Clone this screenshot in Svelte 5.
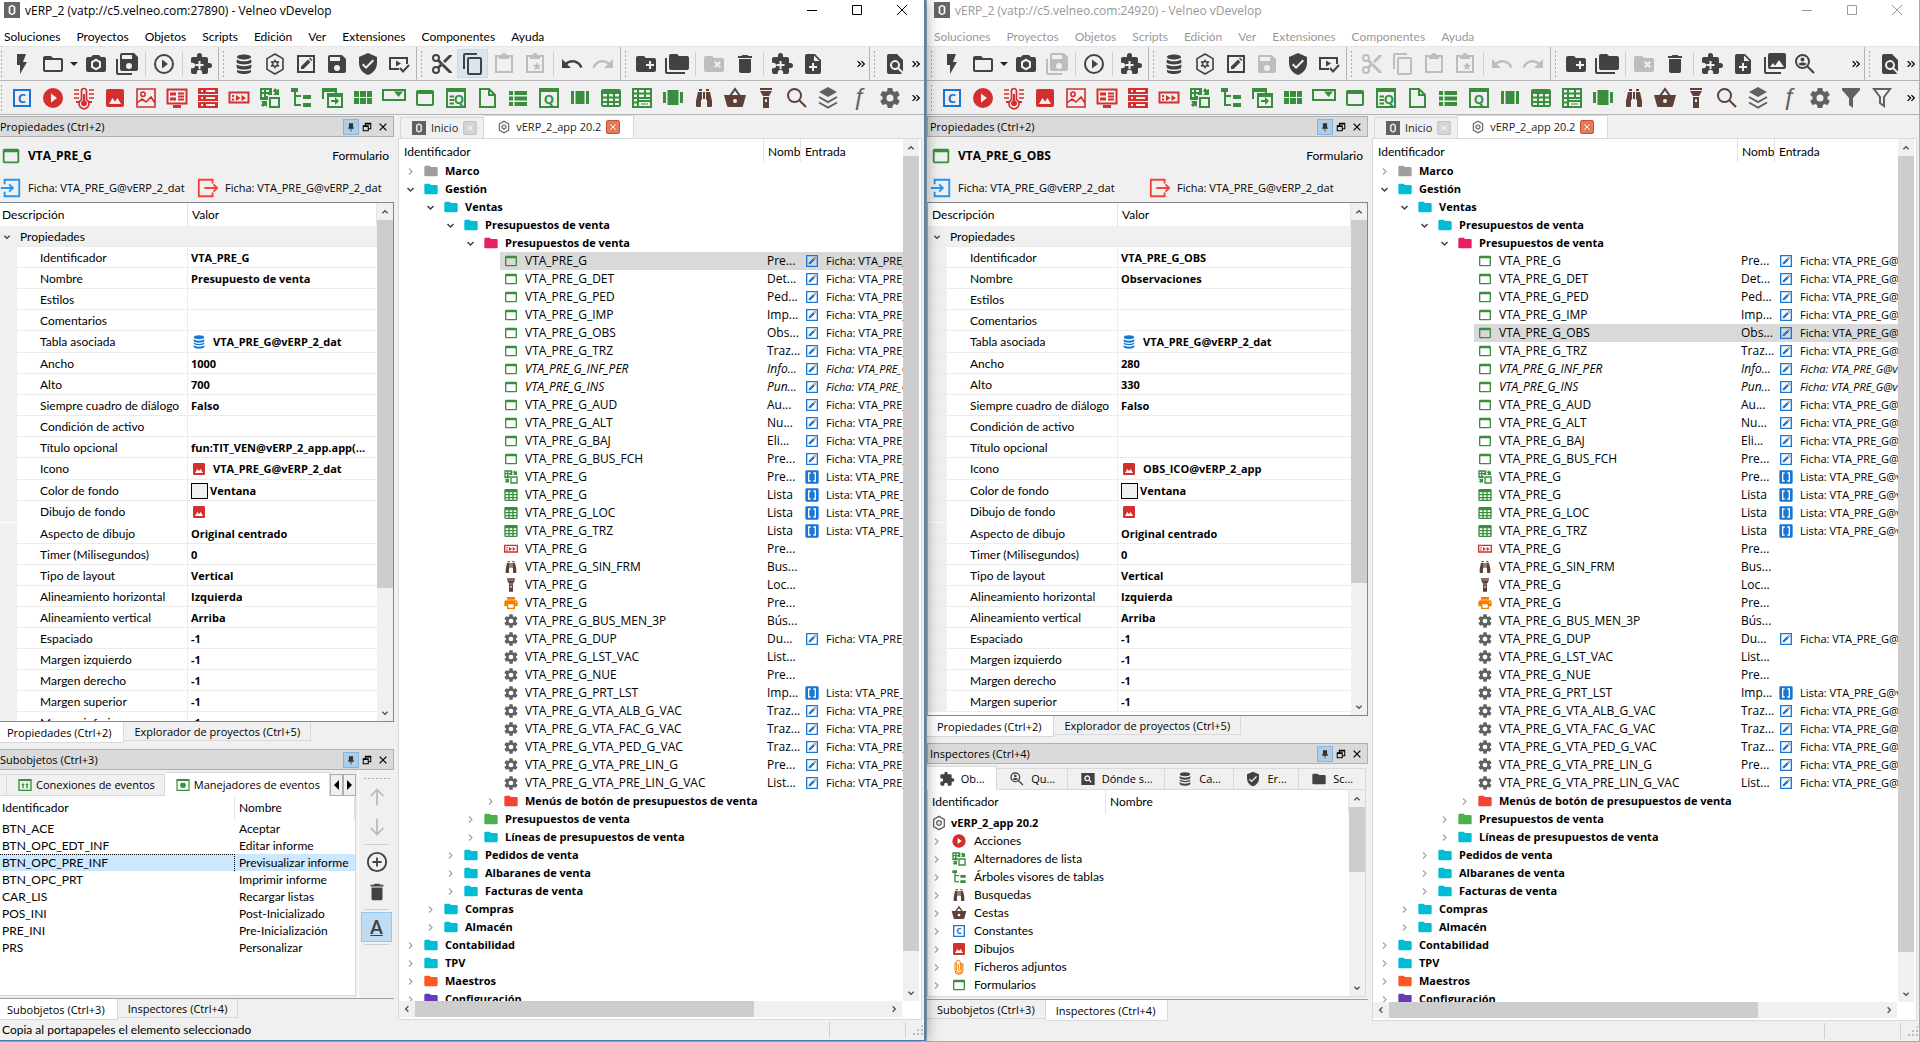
<script lang="ts">
  type Icon = { d?: string; s?: string; w?: number; t?: string };
  type Node = { depth: number; icon: string; name: string; folder?: boolean; open?: boolean; italic?: boolean; short?: string; entry?: string };

  const folderPath = "M10 4l2 2h8a2 2 0 0 1 2 2v10a2 2 0 0 1-2 2H4a2 2 0 0 1-2-2V6c0-1.1.9-2 2-2h6z";
  const puzzlePath =
    "M20.500 11H19V7a2 2 0 0 0-2-2h-4V3.500A2.500 2.500 0 0 0 10.500 1 2.500 2.500 0 0 0 8 3.500V5H4a2 2 0 0 0-2 2v3.800h1.500c1.500 0 2.700 1.200 2.700 2.700S5 16.200 3.500 16.200H2V20a2 2 0 0 0 2 2h3.800v-1.500c0-1.500 1.200-2.700 2.700-2.700s2.700 1.200 2.700 2.700V22H17a2 2 0 0 0 2-2v-4h1.500a2.500 2.500 0 0 0 0-5z";

  const icons: Record<string, Icon> = {
    bolt: { d: "M7 2v11h3v9l7-12h-4l3-8z" },
    folderOpen: { d: "M20 18H4V8h16m0-2h-8l-2-2H4c-1.100 0-2 .9-2 2v12a2 2 0 0 0 2 2h16a2 2 0 0 0 2-2V8a2 2 0 0 0-2-2z" },
    camera: {
      d: "M4 5h3l2-2h6l2 2h3a2 2 0 0 1 2 2v11a2 2 0 0 1-2 2H4a2 2 0 0 1-2-2V7a2 2 0 0 1 2-2zM12 6.500l-5 3v6l5 3 5-3v-6zM12 9l3 1.800v3.400L12 16l-3-1.800v-3.400z",
    },
    saveAll: {
      d: "M17 7V3H7v4h10m-3 10a3 3 0 0 0 0-6 3 3 0 0 0 0 6m5-16 4 4v12a2 2 0 0 1-2 2H7a2 2 0 0 1-2-2V3a2 2 0 0 1 2-2h12M1 7h2v14h14v2H3a2 2 0 0 1-2-2V7z",
    },
    play: { d: "M10 16.500l6-4.500-6-4.500v9z", s: "M12 3a9 9 0 1 0 0 18 9 9 0 0 0 0-18z" },
    puzzleAdd: { d: puzzlePath + "M9.500 9v3h-3v2h3v3h2v-3h3v-2h-3V9z" },
    puzzle: { d: puzzlePath },
    barrel: {
      d: "M5 5c0-1.500 3-2.500 7-2.500s7 1 7 2.500-3 2.500-7 2.500S5 6.500 5 5zM5 7.500c2 1.400 4 1.800 7 1.800s5-.4 7-1.800l.6 3c-2 1.400-4.600 1.900-7.600 1.900s-5.600-.5-7.600-1.900zM4.500 12.500c2.200 1.200 4.500 1.700 7.500 1.700s5.300-.5 7.500-1.700l-.3 3.500c-2 1-4.200 1.500-7.200 1.500S6.800 17 4.800 16zM5 17.700c2 1 4 1.400 7 1.400s5-.4 7-1.400v1.800c0 1.500-3 2.500-7 2.500s-7-1-7-2.500z",
    },
    hexGear: {
      s: "M12 2l8 4.600v10.800L12 22l-8-4.600V6.600zM12 9.500a2.500 2.500 0 1 0 0 5 2.500 2.500 0 0 0 0-5zM12 7.500v2M12 14.500v2M8 9.800l2 1M14 13.200l2 1M16 9.800l-2 1M10 13.200l-2 1",
      w: 1.600,
    },
    hex: { s: "M12 2l8 4.600v10.800L12 22l-8-4.600V6.600zM12 8.500a3.500 3.500 0 1 0 0 7 3.500 3.500 0 0 0 0-7zM12 11.500v1" },
    edit: { s: "M4 4h16v16H4z", d: "M7 17v-2.500l7-7 2.500 2.500-7 7zM15 6.500l1-1 2.500 2.500-1 1z" },
    save: {
      d: "M15 9H5V5h10m-3 14a3 3 0 0 1 0-6 3 3 0 0 1 0 6m5-16H5a2 2 0 0 0-2 2v14a2 2 0 0 0 2 2h14a2 2 0 0 0 2-2V7l-4-4z",
    },
    shield: {
      d: "M10 17l-4-4 1.400-1.400L10 14.200l6.600-6.600L18 9m-6-8L3 5v6c0 5.600 3.800 10.700 9 12 5.200-1.300 9-6.400 9-12V5l-9-4z",
    },
    screenCheck: { d: "M9 8.500v6l5-3z", s: "M12 17H3V6h17v6M13 16l3 3.500 6-6.500" },
    cut: {
      d: "M19 3l-6 6 2 2 7-7V3m-10 9.500a.5.5 0 0 1 0-1 .5.5 0 0 1 0 1M6 20a2 2 0 0 1 0-4 2 2 0 0 1 0 4M6 8a2 2 0 0 1 0-4 2 2 0 0 1 0 4m3.640-.36c.23-.5.36-1.050.36-1.640a4 4 0 0 0-8 0 4 4 0 0 0 4 4c.59 0 1.140-.13 1.640-.36L10 12l-2.360 2.360C7.140 14.130 6.590 14 6 14a4 4 0 0 0 0 8 4 4 0 0 0 4-4c0-.59-.13-1.140-.36-1.640L12 14l7 7h3v-1L9.640 7.640z",
    },
    copy: {
      d: "M19 21H8V7h11m0-2H8a2 2 0 0 0-2 2v14a2 2 0 0 0 2 2h11a2 2 0 0 0 2-2V7a2 2 0 0 0-2-2m-3-4H4a2 2 0 0 0-2 2v14h2V3h12V1z",
    },
    paste: { s: "M4 4h16v16H4z", d: "M7 3h2.200a3 3 0 0 1 5.600 0H17v4H7zM12 3a1 1 0 1 0 0 2 1 1 0 0 0 0-2z" },
    pasteStar: {
      s: "M4 4h16v16H4z",
      d: "M7 3h2.200a3 3 0 0 1 5.600 0H17v4H7zM12 3a1 1 0 1 0 0 2 1 1 0 0 0 0-2zM14 10l1.200 2.700 2.900.3-2.200 2 .6 2.900-2.500-1.500-2.500 1.500.6-2.900-2.200-2 2.900-.3z",
    },
    undo: {
      d: "M12.500 8c-2.700 0-5 1-6.900 2.600L2 7v9h9l-3.600-3.600c1.400-1.200 3.100-1.900 5.100-1.900 3.500 0 6.500 2.300 7.600 5.500l2.400-.8C21 11 17.100 8 12.500 8z",
    },
    redo: {
      d: "M18.400 10.600C16.500 9 14.200 8 11.500 8c-4.600 0-8.600 3-10 7.200l2.400.8a8 8 0 0 1 7.600-5.500c2 0 3.700.7 5.100 1.900L13 16h9V7z",
    },
    folderAdd: { d: folderPath + "M15 9v3h-3v2h3v3h2v-3h3v-2h-3V9z" },
    folders: {
      d: "M22 4h-8l-2-2H6a2 2 0 0 0-2 2v12a2 2 0 0 0 2 2h16a2 2 0 0 0 2-2V6a2 2 0 0 0-2-2M2 6H0v14a2 2 0 0 0 2 2h18v-2H2V6z",
    },
    folderRemove: { d: folderPath + "M13.400 9L12 10.400l2.100 2.100L12 14.600l1.400 1.400 2.100-2.100 2.100 2.100 1.400-1.400-2.100-2.100 2.100-2.100L17.600 9l-2.100 2.100z" },
    folder: { d: folderPath },
    trash: { d: "M19 4h-3.500l-1-1h-5l-1 1H5v2h14M6 19a2 2 0 0 0 2 2h8a2 2 0 0 0 2-2V7H6v12z" },
    fileAdd: {
      d: "M13 9h5.500L13 3.500V9M6 2h8l6 6v12a2 2 0 0 1-2 2H6a2 2 0 0 1-2-2V4c0-1.100.9-2 2-2zM11 11v3H8v2h3v3h2v-3h3v-2h-3v-3z",
    },
    images: {
      d: "M24 15V3a2 2 0 0 0-2-2H8a2 2 0 0 0-2 2v12a2 2 0 0 0 2 2h14a2 2 0 0 0 2-2m-13-4l2 2.700L17 8l5 7H8M2 5v15a2 2 0 0 0 2 2h15v-2H4V5z",
    },
    searchUser: {
      s: "M9.500 3a6.500 6.500 0 1 0 0 13 6.500 6.500 0 0 0 0-13zM14.500 14.500L21 21",
      d: "M9.500 5.500a2 2 0 1 1 0 4 2 2 0 0 1 0-4zM5.500 12c1-2 7-2 8 0-1 2-7 2-8 0z",
    },
    findPage: {
      d: "M20 19.600V8l-6-6H6a2 2 0 0 0-2 2v16c0 1.100.9 2 2 2h12c.5 0 .9-.1 1.200-.4l-4.400-4.400A5 5 0 1 1 17 13c0 1-.3 2-.8 2.800zM9 13a3 3 0 1 0 6 0 3 3 0 0 0-6 0z",
    },
    constant: { s: "M4 4h16v16H4z", t: "C" },
    action: { d: "M10 16.500v-9l6 4.500M12 2a10 10 0 1 0 0 20 10 10 0 0 0 0-20z" },
    thermo: {
      s: "M14.500 13.500V5a2.500 2.500 0 0 0-5 0v8.500a5 5 0 1 0 5 0zM2 4h5M2 8h5M2 12h5M17 4h5M17 8h5M17 12h5",
      w: 1.700,
      d: "M11 8h2v6.500a3 3 0 1 1-2 0zM4 15h3v2H4zM17 15h3v2h-3z",
    },
    image: { d: "M5 3h14a2 2 0 0 1 2 2v14a2 2 0 0 1-2 2H5a2 2 0 0 1-2-2V5c0-1.100.9-2 2-2zM6 18h12l-3.500-6-2.500 3.500L9.500 12z" },
    picture: { s: "M3 3h18v18H3zM9 6a2.200 2.200 0 1 0 0 4.400A2.200 2.200 0 0 0 9 6zM3 17l5-4 4 3 5-5 4 6", w: 1.600 },
    monitor: { s: "M2.500 3.500h19v14h-19z", d: "M5 6.500h6v3H5zM5 11.500h6v3H5zM13 6.500h6v2h-6zM13 9.500h6v2h-6zM13 12.500h6v2h-6zM8 19h8v3H8z" },
    servers: { d: "M2 2h20v6H2zM5 4v2h2V4zM10 4v2h9V4zM2 9h20v6H2zM5 11v2h2v-2zM10 11v2h9v-2zM2 16h20v6H2zM5 18v2h2v-2zM10 18v2h9v-2z" },
    ticker: { s: "M2.500 6.500h19v10h-19z", d: "M5 9h2v2H5zM5 12.500h2v2H5zM9 9l4.500 3L9 15zM14.500 9l4.500 3-4.500 3z" },
    swap: {
      d: "M2 2h12v7h-4v5H2zM4 4v2h2V4zM8 4v2h3V4zM4 8v3h2V8zM8 8v2h2V8zM17 2l2 2 2-1v6h-6l2-2-2-2zM3 15h6v6l-2-1.500L5 21l-2-2 1.500-2z",
      s: "M12 12h9v9h-9z",
    },
    tree: { s: "M6 4v15h6M6 10h6", d: "M2 2h7v4H2zM14 9h8v4h-8zM14 17h8v4h-8z" },
    copyForm: { s: "M3 13V3h13v4M8 8h14v13H8zM3 5h13M8 10h14", d: "M15 11l4 4-4 4v-3h-4v-2h4z" },
    blocks: { d: "M3 5h5v6H3zM9 5h6v6H9zM16 5h5v6h-5zM3 12h5v6H3zM9 12h6v6H9zM16 12h5v6h-5z" },
    combo: { s: "M1 4h22v10H1z", d: "M12 5.500h9L16.500 11z" },
    form: { d: "M5 4h14a2 2 0 0 1 2 2v12a2 2 0 0 1-2 2H5a2 2 0 0 1-2-2V6c0-1.100.9-2 2-2zM5 8v10h14V8z" },
    query: { s: "M3 3h18v18H3zM3 5h18M5.500 10.500h4.500M5.500 14h4.500M5.500 17.500h4.500", t: "q" },
    file: { s: "M5 3h9l6 6v12H5zM14 3v6h6" },
    list: { d: "M3 5h4v4H3zM8.500 5H21v4H8.500zM3 10.500h4v4H3zM8.500 10.500H21v4H8.500zM3 16h4v4H3zM8.500 16H21v4H8.500z" },
    queryBox: { s: "M3 3h18v18H3zM3 5h18", t: "Q" },
    columns: { d: "M3 5h3v13H3zM7.500 5h9v13h-9zM18 5h3v13h-3z" },
    grid: {
      d: "M4 3h16a2 2 0 0 1 2 2v14a2 2 0 0 1-2 2H4a2 2 0 0 1-2-2V5c0-1.100.9-2 2-2zM4 8v2.500h4V8zM10 8v2.500h4V8zM16 8v2.500h4V8zM4 12.500V15h4v-2.500zM10 12.500V15h4v-2.500zM16 12.500V15h4v-2.500zM4 17v2h4v-2zM10 17v2h4v-2zM16 17v2h4v-2z",
    },
    gridEdit: {
      d: "M2 2h20v20H2zM4 4v2.500h3V4zM9 4v2.500h5V4zM16 4v2.500h4V4zM4 8.500V11h3V8.500zM9 8.500V11h5V8.500zM16 8.500V11h4V8.500zM4 13v2.500h3V13zM9 13v1h11v-1zM4 17.500V20h3v-2.500zM9 16v4h11v-4zM11 17.500h7v1h-7z",
    },
    carousel: { d: "M6.500 4h11v15h-11zM2 6h3v11H2zM19 6h3v11h-3z" },
    binoculars: {
      d: "M11 6h2v7h-2zM9 20a1 1 0 0 1-1 1H5a1 1 0 0 1-1-1v-5l2-9h4v7a1 1 0 0 1-1 1zM10 5H7V3h3zM15 20v-6a1 1 0 0 1-1-1V6h4l2 9v5a1 1 0 0 1-1 1h-3a1 1 0 0 1-1-1zM14 5V3h3v2z",
    },
    basket: { s: "M7 10l5-7 5 7", d: "M1 9h22l-3 11c-.3.700-.900 1-1.500 1h-13c-.7 0-1.200-.3-1.500-1zM12 13a2 2 0 1 0 0 4 2 2 0 0 0 0-4z" },
    torch: { d: "M6 2h12v2H6zM6 5h12l-3 5H9zM9 11h6v11H9zM12 13a1 1 0 0 0-1 1v2h2v-2a1 1 0 0 0-1-1z" },
    search: { s: "M9.500 3a6.500 6.500 0 1 0 0 13 6.500 6.500 0 0 0 0-13zM14.500 14.500L21 21" },
    layers: { d: "M12 1l9 5-9 5-9-5z", s: "M3 11l9 5 9-5M3 16.500l9 5 9-5" },
    func: { t: "ƒ" },
    gear: {
      d: "M12 15.500a3.500 3.500 0 1 1 0-7 3.500 3.500 0 0 1 0 7m7.430-2.530c.04-.32.07-.64.07-.97 0-.33-.03-.66-.07-1l2.110-1.630c.19-.15.24-.42.12-.64l-2-3.460c-.12-.22-.39-.31-.61-.22l-2.490 1c-.52-.39-1.060-.73-1.690-.98l-.37-2.650A.506.506 0 0 0 14 2h-4c-.25 0-.46.18-.5.42l-.37 2.650c-.63.25-1.170.59-1.690.98l-2.490-1c-.22-.09-.49 0-.61.22l-2 3.460c-.13.22-.07.49.12.64L4.570 11c-.04.34-.07.67-.07 1 0 .33.03.65.07.97l-2.110 1.660c-.19.15-.25.42-.12.64l2 3.460c.12.22.39.3.61.22l2.490-1.010c.52.4 1.060.74 1.690.99l.37 2.650c.04.24.25.42.5.42h4c.25 0 .46-.18.5-.42l.37-2.650c.63-.26 1.170-.59 1.690-.99l2.490 1.010c.22.08.49 0 .61-.22l2-3.460c.12-.22.07-.49-.12-.64l-2.110-1.660z",
    },
    filter: { d: "M3 2h18v2l-7 8v10l-4-3v-7L3 4z" },
    filterOff: { s: "M4 3h16l-6 8v9l-4-3v-6z" },
    printer: {
      d: "M18 3H6v4h12m1 5a1 1 0 0 1 0-2 1 1 0 0 1 0 2m-3 7H8v-5h8m3-6H5a3 3 0 0 0-3 3v6h4v4h12v-4h4v-6a3 3 0 0 0-3-3z",
    },
    brackets: { d: "M4 2h16a2 2 0 0 1 2 2v16a2 2 0 0 1-2 2H4a2 2 0 0 1-2-2V4c0-1.100.9-2 2-2zM6 5v14h4v-2H8V7h2V5zM14 5v2h2v10h-2v2h4V5z" },
    database: {
      d: "M12 2c4.400 0 8 1.300 8 3s-3.600 3-8 3-8-1.300-8-3 3.600-3 8-3zM4 7.500C5.500 9 8.500 10 12 10s6.500-1 8-2.500V10c0 1.700-3.600 3-8 3s-8-1.300-8-3zM4 12.500c1.500 1.500 4.500 2.500 8 2.500s6.500-1 8-2.500V14c0 1.700-3.600 3-8 3s-8-1.300-8-3zM4 16.500C5.500 18 8.500 19 12 19s6.500-1 8-2.500V19c0 1.700-3.600 3-8 3s-8-1.300-8-3z",
    },
    screenSearch: { d: "M2 3h20v18H2zM11 6.500a4.500 4.500 0 1 0 2.300 8.300L16 17.500l1.500-1.500-2.700-2.700A4.500 4.500 0 0 0 11 6.500zM11 8.500a2.500 2.500 0 1 1 0 5 2.500 2.500 0 0 1 0-5z" },
    clip: { s: "M16 6v11a4 4 0 0 1-8 0V5a3 3 0 0 1 6 0v11a1.500 1.500 0 0 1-3 0V7M18 6v11a6 6 0 0 1-12 0V5", w: 1.500 },
    handler: { s: "M3 4h18v16H3zM3 5h18M12 9.500a3 3 0 1 0 0 6 3 3 0 0 0 0-6zM7.500 12.500h9M9 9l6 7M15 9l-6 7", w: 1.800 },
    connection: { s: "M3 4h18v16H3zM3 5h18M9 17v-6M15 17v-6", d: "M6.500 12L9 9l2.500 3zM12.500 12L15 9l2.500 3z" },
    enter: { s: "M5 8V3h16v18H5v-5M1 12h13M10 8l4 4-4 4" },
    leave: { s: "M17 7V3H2v18h15v-4M8 12h14M18 8l4 4-4 4" },
    up: { s: "M12 21V4M5 11l7-7 7 7" },
    down: { s: "M12 3v17M5 13l7 7 7-7" },
    add: { s: "M12 2a10 10 0 1 0 0 20 10 10 0 0 0 0-20zM12 7v10M7 12h10" },
    logo: { d: "M0 0h24v24H0zM12 4L7 7v10l5 3 5-3V7zM12 6.500l2.500 1.500v8L12 17.500 9.500 16V8z" },
    pin: { d: "M7 3h10v10h2v3h-6v7h-2v-7H5v-3h2z" },
    restore: { s: "M3 9h12v12H3zM3 11h12M8 9V3h13v13h-6M8 5h13", w: 2.500 },
    close: { s: "M4 4l16 16M20 4L4 20", w: 3 },
    right: { s: "M8 4l8 8-8 8", w: 3 },
    chevUp: { s: "M4 16l8-8 8 8", w: 4 },
    chevDown: { s: "M4 8l8 8 8-8", w: 4 },
    chevLeft: { s: "M16 4l-8 8 8 8", w: 4 },
    chevRight: { s: "M8 4l8 8-8 8", w: 4 },
    more: { s: "M4 5l7 7-7 7M13 5l7 7-7 7", w: 3 },
  };

  const fileTools = ["bolt", "folderOpen", "v", "camera", "saveAll", "|", "play", "|", "puzzleAdd"];
  const objectTools = ["barrel", "hexGear", "edit", "save", "shield", "screenCheck"];
  const editTools = ["cut", "copy", "paste", "pasteStar", "|", "undo", "redo"];
  const projectTools = ["folderAdd", "folders", "|", "folderRemove", "trash", "|", "puzzleAdd", "fileAdd"];

  const kinds: [string, string[]][] = [
    ["blue", ["constant"]],
    ["red", ["action", "thermo", "image", "picture", "monitor", "servers", "ticker"]],
    ["green", ["swap", "tree", "copyForm", "blocks", "combo", "form", "query", "file", "list", "queryBox", "columns", "grid", "gridEdit", "carousel"]],
    ["brown", ["binoculars", "basket", "torch", "search"]],
    ["grey", ["layers", "func", "gear"]],
  ];

  const menus = ["Soluciones", "Proyectos", "Objetos", "Scripts", "Edición", "Ver", "Extensiones", "Componentes", "Ayuda"];

  const folder = (depth: number, name: string, icon = "cyan", open = false): Node => ({ depth, name, icon, open, folder: true });

  const leaves = `form green VTA_PRE_G Pre... F
form green VTA_PRE_G_DET Det... F
form green VTA_PRE_G_PED Ped... F
form green VTA_PRE_G_IMP Imp... F
form green VTA_PRE_G_OBS Obs... F
form green VTA_PRE_G_TRZ Traz... F
form green VTA_PRE_G_INF_PER Info... F i
form green VTA_PRE_G_INS Pun... F i
form green VTA_PRE_G_AUD Au... F
form green VTA_PRE_G_ALT Nu... F
form green VTA_PRE_G_BAJ Eli... F
form green VTA_PRE_G_BUS_FCH Pre... F
swap green VTA_PRE_G Pre... L
grid green VTA_PRE_G Lista L
grid green VTA_PRE_G_LOC Lista L
grid green VTA_PRE_G_TRZ Lista L
ticker red VTA_PRE_G Pre... -
binoculars brown VTA_PRE_G_SIN_FRM Bus... -
torch brown VTA_PRE_G Loc... -
printer orange VTA_PRE_G Pre... -
gear grey VTA_PRE_G_BUS_MEN_3P Bús... -
gear grey VTA_PRE_G_DUP Du... F
gear grey VTA_PRE_G_LST_VAC List... -
gear grey VTA_PRE_G_NUE Pre... -
gear grey VTA_PRE_G_PRT_LST Imp... L
gear grey VTA_PRE_G_VTA_ALB_G_VAC Traz... F
gear grey VTA_PRE_G_VTA_FAC_G_VAC Traz... F
gear grey VTA_PRE_G_VTA_PED_G_VAC Traz... F
gear grey VTA_PRE_G_VTA_PRE_LIN_G Pre... F
gear grey VTA_PRE_G_VTA_PRE_LIN_G_VAC List... F`
    .split("\n")
    .map((line): Node & { color: string } => {
      const [icon, color, name, short, entry, italic] = line.split(" ");
      return { depth: 4, icon, color, name, short, entry, italic: !!italic };
    });

  const nodes: (Node & { color?: string })[] = [
    folder(0, "Marco", "silver"),
    folder(0, "Gestión", "cyan", true),
    folder(1, "Ventas", "cyan", true),
    folder(2, "Presupuestos de venta", "cyan", true),
    folder(3, "Presupuestos de venta", "pink", true),
    ...leaves,
    folder(4, "Menús de botón de presupuestos de venta", "scarlet"),
    folder(3, "Presupuestos de venta", "lime"),
    folder(3, "Líneas de presupuestos de venta"),
    folder(2, "Pedidos de venta"),
    folder(2, "Albaranes de venta"),
    folder(2, "Facturas de venta"),
    folder(1, "Compras"),
    folder(1, "Almacén"),
    folder(0, "Contabilidad"),
    folder(0, "TPV"),
    folder(0, "Maestros", "ember"),
    folder(0, "Configuración", "violet"),
  ];

  const properties = (id: string, name: string, width: string, height: string, title: string, icon: string) => [
    ["Identificador", id],
    ["Nombre", name],
    ["Estilos", ""],
    ["Comentarios", ""],
    ["Tabla asociada", "VTA_PRE_G@vERP_2_dat", "database"],
    ["Ancho", width],
    ["Alto", height],
    ["Siempre cuadro de diálogo", "Falso"],
    ["Condición de activo", ""],
    ["Título opcional", title],
    ["Icono", icon, "image"],
    ["Color de fondo", "Ventana", "swatch"],
    ["Dibujo de fondo", "", "image"],
    ["Aspecto de dibujo", "Original centrado"],
    ["Timer (Milisegundos)", "0"],
    ["Tipo de layout", "Vertical"],
    ["Alineamiento horizontal", "Izquierda"],
    ["Alineamiento vertical", "Arriba"],
    ["Espaciado", "-1"],
    ["Margen izquierdo", "-1"],
    ["Margen derecho", "-1"],
    ["Margen superior", "-1"],
    ["Margen inferior", "-1"],
  ];

  const handlers = [
    ["BTN_ACE", "Aceptar"],
    ["BTN_OPC_EDT_INF", "Editar informe"],
    ["BTN_OPC_PRE_INF", "Previsualizar informe"],
    ["BTN_OPC_PRT", "Imprimir informe"],
    ["CAR_LIS", "Recargar listas"],
    ["POS_INI", "Post-Inicializado"],
    ["PRE_INI", "Pre-Inicialización"],
    ["PRS", "Personalizar"],
  ];

  const inspectorTabs = [
    ["puzzle", "Ob..."],
    ["searchUser", "Qu..."],
    ["screenSearch", "Dónde s..."],
    ["database", "Ca..."],
    ["shield", "Er..."],
    ["folder", "Sc..."],
  ];

  const inspected = [
    ["action", "red", "Acciones"],
    ["swap", "green", "Alternadores de lista"],
    ["tree", "green", "Árboles visores de tablas"],
    ["binoculars", "brown", "Busquedas"],
    ["basket", "brown", "Cestas"],
    ["constant", "blue", "Constantes"],
    ["image", "red", "Dibujos"],
    ["clip", "orange", "Ficheros adjuntos"],
    ["form", "green", "Formularios"],
  ];

  const windows = [
    {
      front: true,
      title: "vERP_2 (vatp://c5.velneo.com:27890) - Velneo vDevelop",
      object: "VTA_PRE_G",
      project: projectTools,
      extra: [] as string[],
      disabled: ["paste", "pasteStar", "redo", "folderRemove"],
      selected: 5,
      thumb: 72,
      status: "Copia al portapapeles el elemento seleccionado",
      rows: properties("VTA_PRE_G", "Presupuesto de venta", "1000", "700", "fun:TIT_VEN@vERP_2_app.app(...", "VTA_PRE_G@vERP_2_dat"),
    },
    {
      front: false,
      title: "vERP_2 (vatp://c5.velneo.com:24920) - Velneo vDevelop",
      object: "VTA_PRE_G_OBS",
      project: [...projectTools, "images", "searchUser"],
      extra: ["filter", "filterOff"],
      disabled: ["saveAll", "save", ...editTools, "folderRemove"],
      selected: 9,
      thumb: 75,
      status: "",
      rows: properties("VTA_PRE_G_OBS", "Observaciones", "280", "330", "", "OBS_ICO@vERP_2_app").slice(0, -1),
    },
  ];
</script>

{#snippet icon(name: string, color = "")}
  {@const shape = icons[name]}
  <svg class="icon {color}" viewBox="0 0 24 24" aria-hidden="true">
    {#if shape.d}<path d={shape.d} fill="currentColor" fill-rule="evenodd" />{/if}
    {#if shape.s}<path d={shape.s} fill="none" stroke="currentColor" stroke-width={shape.w ?? 2} />{/if}
    {#if shape.t === "ƒ"}
      <text class="function" x="12" y="19" text-anchor="middle" fill="currentColor">ƒ</text>
    {:else if shape.t}
      <text class="letter" x={shape.t === "q" ? 15 : 12} y={shape.t === "C" ? 17 : 18} text-anchor="middle" fill="currentColor"
        >{shape.t.toUpperCase()}</text
      >
    {/if}
  </svg>
{/snippet}

{#snippet tools(names: string[], disabled: string[], more = false)}
  <div class="group" class:grow={more} class:wide={names.length > 1}>
    <span class="handle"></span>
    {#each names as name}
      {#if name === "|"}
        <span class="separator"></span>
      {:else if name === "v"}
        <button class="drop" aria-label="Abrir reciente"></button>
      {:else}
        <button
          class="tool"
          class:active={name === "copy" && !disabled.includes(name)}
          disabled={disabled.includes(name)}
          aria-label={name}>{@render icon(name)}</button
        >
      {/if}
    {/each}
    {#if more}<button class="more" aria-label="Más herramientas">{@render icon("more")}</button>{/if}
  </div>
{/snippet}

{#snippet scrollbar(size: number, horizontal = false)}
  <div class="scrollbar" class:horizontal>
    <button class="arrow" aria-label="Retroceder">{@render icon(horizontal ? "chevLeft" : "chevUp")}</button>
    <div class="track"><div class="thumb" style="--size: {size}%"></div></div>
    <button class="arrow" aria-label="Avanzar">{@render icon(horizontal ? "chevRight" : "chevDown")}</button>
  </div>
{/snippet}

{#snippet dockHeader(title: string)}
  <header class="dock-header">
    <h2>{title}</h2>
    <button class="dock-button pinned" aria-label="Fijar">{@render icon("pin")}</button>
    <button class="dock-button" aria-label="Restaurar">{@render icon("restore")}</button>
    <button class="dock-button" aria-label="Cerrar">{@render icon("close")}</button>
  </header>
{/snippet}

{#snippet dockTabs(names: string[], current: number)}
  <div class="dock-tabs" role="tablist">
    {#each names as name, idx}
      <button class="dock-tab" class:current={idx === current} role="tab" aria-selected={idx === current}>{name}</button>
    {/each}
  </div>
{/snippet}

<div class="desktop">
  {#each windows as win}
    <section class="window" class:front={win.front} class:back={!win.front}>
      <header class="titlebar">
        <span class="app-icon">{@render icon("logo")}</span>
        <h1>{win.title}</h1>
        <button class="system" aria-label="Minimizar"><svg viewBox="0 0 10 10"><path d="M0 5.500h10" /></svg></button>
        <button class="system" aria-label="Maximizar"><svg viewBox="0 0 10 10"><path d="M.5.500h9v9h-9z" /></svg></button>
        <button class="system" aria-label="Cerrar"><svg viewBox="0 0 10 10"><path d="M0 0l10 10M10 0L0 10" /></svg></button>
      </header>
      <nav class="menubar">
        {#each menus as menu}
          <button>{menu}</button>
        {/each}
      </nav>
      <div class="toolbar">
        {@render tools(fileTools, win.disabled)}
        {@render tools(objectTools, win.disabled)}
        {@render tools(editTools, win.disabled)}
        {@render tools(win.project, win.disabled, true)}
        {@render tools(["findPage"], [], true)}
      </div>
      <div class="toolbar">
        <div class="group grow wide">
          <span class="handle"></span>
          {#each kinds as [color, names]}
            {#each names as name}
              <button class="tool" aria-label={name}>{@render icon(name, color)}</button>
            {/each}
          {/each}
          {#each win.extra as name}
            <button class="tool" aria-label={name}>{@render icon(name, "grey")}</button>
          {/each}
          <button class="more" aria-label="Más objetos">{@render icon("more")}</button>
        </div>
      </div>

      <div class="workspace">
        <aside class="docks">
          <section class="dock upper">
            {@render dockHeader("Propiedades (Ctrl+2)")}
            <div class="object">
              {@render icon("form", "green")}
              <strong>{win.object}</strong>
              <span>Formulario</span>
            </div>
            <div class="links">
              <span>{@render icon("enter", "sky")}Ficha: VTA_PRE_G@vERP_2_dat</span>
              <span>{@render icon("leave", "coral")}Ficha: VTA_PRE_G@vERP_2_dat</span>
            </div>
            <div class="properties">
              <div class="clip">
                <table class="sheet">
                  <thead>
                    <tr><th class="label-column">Descripción</th><th>Valor</th></tr>
                  </thead>
                  <tbody>
                    <tr class="section">
                      <td colspan="2"><span class="cell">{@render icon("chevDown")}Propiedades</span></td>
                    </tr>
                    {#each win.rows as [label, value, mark]}
                      <tr class:tall={mark && mark !== "swatch"} class:plain={label === "Dibujo de fondo"}>
                        <td class="label">{label}</td>
                        <td class="value">
                          <span class="cell">
                            {#if mark === "swatch"}
                              <span class="swatch"></span>
                            {:else if mark}
                              {@render icon(mark, mark === "image" ? "red" : "blue")}
                            {/if}
                            {value}
                          </span>
                        </td>
                      </tr>
                    {/each}
                  </tbody>
                </table>
              </div>
              {@render scrollbar(76)}
            </div>
            {@render dockTabs(["Propiedades (Ctrl+2)", "Explorador de proyectos (Ctrl+5)"], 0)}
          </section>

          {#if win.front}
            <section class="dock">
              {@render dockHeader("Subobjetos (Ctrl+3)")}
              <div class="subobjects">
                <div class="pages">
                  <div class="page-tabs" role="tablist">
                    <span class="page-tab stub"></span>
                    <button class="page-tab" role="tab" aria-selected="false">{@render icon("connection", "green")}Conexiones de eventos</button>
                    <button class="page-tab current" role="tab" aria-selected="true">{@render icon("handler", "green")}Manejadores de eventos</button>
                    <button class="page-scroll" aria-label="Pestañas anteriores"><i class="left"></i></button>
                    <button class="page-scroll" aria-label="Pestañas siguientes"><i></i></button>
                  </div>
                  <div class="page">
                    <table class="handlers">
                      <thead>
                        <tr><th class="id-column">Identificador</th><th>Nombre</th></tr>
                      </thead>
                      <tbody>
                        {#each handlers as [id, name]}
                          <tr class:chosen={id === "BTN_OPC_PRE_INF"}><td>{id}</td><td>{name}</td></tr>
                        {/each}
                      </tbody>
                    </table>
                  </div>
                </div>
                <div class="side">
                  <span class="side-handle"></span>
                  <button disabled aria-label="Subir">{@render icon("up")}</button>
                  <button disabled aria-label="Bajar">{@render icon("down")}</button>
                  <hr />
                  <button aria-label="Añadir">{@render icon("add")}</button>
                  <button aria-label="Eliminar">{@render icon("trash")}</button>
                  <hr />
                  <button class="on"><u>A</u></button>
                  <hr />
                </div>
              </div>
              {@render dockTabs(["Subobjetos (Ctrl+3)", "Inspectores (Ctrl+4)"], 0)}
            </section>
          {:else}
            <section class="dock">
              {@render dockHeader("Inspectores (Ctrl+4)")}
              <div class="inspectors">
                <div class="page-tabs" role="tablist">
                  {#each inspectorTabs as [name, label], idx}
                    <button class="page-tab dark" class:current={idx === 0} role="tab" aria-selected={idx === 0}>{@render icon(name)}{label}</button>
                  {/each}
                </div>
                <div class="page">
                  <div class="clip">
                    <table class="inspected">
                      <thead>
                        <tr><th class="id-column">Identificador</th><th>Nombre</th></tr>
                      </thead>
                      <tbody>
                        <tr><td colspan="2"><span class="cell root">{@render icon("hex", "grey")}vERP_2_app 20.2</span></td></tr>
                        {#each inspected as [name, color, label]}
                          <tr>
                            <td colspan="2">
                              <span class="cell"><span class="twist">{@render icon("right")}</span>{@render icon(name, color)}{label}</span>
                            </td>
                          </tr>
                        {/each}
                      </tbody>
                    </table>
                  </div>
                  {@render scrollbar(38)}
                </div>
              </div>
              {@render dockTabs(["Subobjetos (Ctrl+3)", "Inspectores (Ctrl+4)"], 1)}
            </section>
          {/if}
        </aside>

        <main class="editor">
          <div class="editor-tabs" role="tablist">
            <div class="editor-tab">
              <button role="tab" aria-selected="false">{@render icon("logo")}Inicio</button>
              <button class="close" aria-label="Cerrar Inicio">{@render icon("close")}</button>
            </div>
            <div class="editor-tab current">
              <button role="tab" aria-selected="true">{@render icon("hex")}vERP_2_app 20.2</button>
              <button class="close" aria-label="Cerrar vERP_2_app">{@render icon("close")}</button>
            </div>
          </div>
          <div class="tree-frame">
            <div class="tree-row">
              <div class="clip">
                <table class="tree">
                  <thead>
                    <tr><th class="tree-id">Identificador</th><th class="tree-name">Nombre</th><th>Entrada</th></tr>
                  </thead>
                  <tbody>
                    {#each nodes as node, idx}
                      <tr class:selected={idx === win.selected} class:italic={node.italic}>
                        <td colspan={node.folder ? 3 : 1}>
                          <span class="node" style="--depth: {node.depth}">
                            <span class="twist" class:open={node.open}>{#if node.folder}{@render icon(node.open ? "chevDown" : "right")}{/if}</span>
                            <span class="caption" class:bold={node.folder}>
                              {@render icon(node.folder ? "folder" : node.icon, node.folder ? node.icon : node.color)}
                              {node.name}
                            </span>
                          </span>
                        </td>
                        {#if !node.folder}
                          <td class="short">{node.short}</td>
                          <td class="entry">
                            {#if node.entry !== "-"}
                              <span class="cell">
                                {@render icon(node.entry === "F" ? "edit" : "brackets", "blue")}
                                {node.entry === "F" ? "Ficha" : "Lista"}: VTA_PRE_G@vERP_2_dat
                              </span>
                            {/if}
                          </td>
                        {/if}
                      </tr>
                    {/each}
                  </tbody>
                </table>
              </div>
              {@render scrollbar(96)}
            </div>
            {@render scrollbar(win.thumb, true)}
          </div>
        </main>
      </div>

      <footer class="statusbar">
        <span class="message">{win.status}</span>
        <span class="slot"></span>
        <span class="grip"></span>
      </footer>
    </section>
  {/each}
</div>

<style>
  :global(body) {
    background: #a9cbea;
  }

  .desktop {
    --font-wide: "Open Sans", "Noto Sans", sans-serif;
    display: grid;
    grid-template-columns: minmax(0, 926fr) minmax(0, 994fr);
    height: 100vh;
    overflow: hidden;
    color: #000;
    font: 12px/16px Lato, "Open Sans", sans-serif;
  }

  .desktop * {
    box-sizing: border-box;
  }

  button {
    display: flex;
    align-items: center;
    justify-content: center;
    margin: 0;
    padding: 0;
    border: 0;
    background: none;
    color: inherit;
    font: inherit;
    white-space: nowrap;
  }

  h1,
  h2 {
    margin: 0;
    font-size: 12px;
    font-weight: 400;
  }

  table {
    width: 100%;
    border-spacing: 0;
    table-layout: fixed;
  }

  th,
  td {
    padding: 0;
    text-align: left;
    font-weight: 400;
    white-space: nowrap;
    overflow: hidden;
  }

  .icon {
    display: block;
    flex: none;
    width: 16px;
    height: 16px;
    overflow: visible;
  }

  .letter {
    font: bold 13px "Open Sans", sans-serif;
  }

  .function {
    font: italic 24px "Liberation Sans", sans-serif;
  }

  .blue { color: #1976d2; }
  .sky { color: #2196f3; }
  .red { color: #d32f2f; }
  .coral { color: #f44336; }
  .green { color: #388e3c; }
  .brown { color: #5d4037; }
  .grey { color: #616161; }
  .orange { color: #f57c00; }
  .silver { color: #9e9e9e; }
  .cyan { color: #00bcd4; }
  .pink { color: #e91e63; }
  .scarlet { color: #f44336; }
  .lime { color: #4caf50; }
  .ember { color: #ff5722; }
  .violet { color: #673ab7; }

  .window {
    display: flex;
    flex-direction: column;
    min-width: 0;
    min-height: 0;
    background: #f0f0f0;
  }

  .front {
    position: relative;
    z-index: 1;
    margin: 0 0 1px -3px;
    border-right: 2px solid #4a86bd;
    border-bottom: 1px solid #3f80bb;
    box-shadow: 0 0 14px rgba(0, 0, 0, 0.4);
  }

  .back {
    border: 1px solid #aaa;
    border-top: 0;
  }

  /* Title and menu */
  .titlebar {
    display: flex;
    flex: none;
    height: 27px;
    background: #fff;
  }

  .app-icon {
    padding: 2px 5px 0 7px;
    color: #666;
  }

  .titlebar h1 {
    flex: 1;
    font-family: var(--font-wide);
    line-height: 22px;
  }

  .system {
    width: 45px;
    height: 20px;
  }

  .system svg {
    width: 10px;
    height: 10px;
    overflow: visible;
    fill: none;
    stroke: #000;
  }

  .menubar {
    display: flex;
    flex: none;
    gap: 16px;
    height: 20px;
    padding: 0 7px;
    border-bottom: 1px solid #e6e6e6;
    background: #fff;
  }

  .back .titlebar h1,
  .back .menubar {
    color: #999;
  }

  .back .system svg {
    stroke: #999;
  }

  /* Toolbars */
  .toolbar {
    display: flex;
    flex: none;
    height: 34px;
    border-bottom: 1px solid #b4b4b4;
    color: #424242;
  }

  .group {
    display: flex;
    flex: none;
    align-items: center;
    padding-right: 2px;
    border-right: 1px solid #b4b4b4;
  }

  .grow.wide {
    flex: 1;
    min-width: 0;
  }

  .group:last-child {
    border-right: 0;
  }

  .handle {
    width: 9px;
    height: 28px;
    background: radial-gradient(circle, #aaa 1px, transparent 1px) 3px 0 / 3px 4px repeat-y;
  }

  .tool {
    width: 31px;
    height: 29px;
  }

  .tool .icon {
    width: 24px;
    height: 24px;
  }

  .tool:disabled {
    color: #bdbdbd;
  }

  .tool.active {
    border: 1px solid #c0dcf3;
    background: #d8e6f1;
  }

  .separator {
    width: 6px;
    height: 24px;
    background: linear-gradient(#cfcfcf, #cfcfcf) center / 1px 100% no-repeat;
  }

  .drop {
    width: 12px;
  }

  .drop::before {
    border: 4px solid transparent;
    border-top-color: #222;
    border-bottom: 0;
    content: "";
  }

  .more {
    width: 12px;
    margin-left: auto;
    color: #000;
  }

  .more .icon {
    width: 10px;
    height: 10px;
  }

  /* Docks */
  .workspace {
    display: flex;
    flex: 1;
    gap: 4px;
    min-height: 0;
  }

  .docks {
    display: flex;
    flex: none;
    flex-direction: column;
    gap: 6px;
    min-width: 0;
    padding-top: 1px;
  }

  .back .docks {
    width: 441px;
  }

  .front .docks {
    width: 397px;
  }

  .dock {
    display: flex;
    flex-direction: column;
    min-height: 0;
  }

  .upper {
    flex: 1;
  }

  .dock-header {
    display: flex;
    flex: none;
    align-items: center;
    height: 21px;
    padding: 0 2px;
    border: 1px solid #b0b0b0;
    background: #dadada;
  }

  .dock-header h2 {
    flex: 1;
    padding-top: 1px;
    font-family: var(--font-wide);
    font-size: 11px;
  }

  .dock-button {
    width: 16px;
    height: 16px;
  }

  .dock-button .icon {
    width: 10px;
    height: 10px;
  }

  .pinned {
    border: 1px solid #82b6e0;
    background: #aecde6;
    color: #333;
  }

  .object,
  .links {
    display: flex;
    flex: none;
    align-items: center;
    height: 37px;
    padding: 0 5px 0 3px;
  }

  .object .icon,
  .links .icon {
    width: 22px;
    height: 22px;
    margin-right: 6px;
  }

  .object strong {
    flex: 1;
    font-family: var(--font-wide);
    font-size: 12px;
  }

  .links {
    height: 28px;
    padding-right: 0;
    font-family: var(--font-wide);
    font-size: 11px;
  }

  .links span {
    display: flex;
    flex: 1;
    align-items: center;
    white-space: nowrap;
  }

  .properties {
    display: flex;
    flex: 1;
    min-height: 0;
    border: 1px solid #828790;
    border-left-color: #b0b0b0;
    background: #fff;
  }

  .clip {
    flex: 1;
    min-width: 0;
    overflow: hidden;
  }

  .cell {
    display: flex;
    align-items: center;
  }

  .sheet th {
    height: 23px;
    padding-left: 4px;
    border-right: 1px solid #e5e5e5;
  }

  .label-column {
    width: 190px;
  }

  .sheet td {
    height: 21px;
    padding-top: 1px;
    border-bottom: 1px solid #ececec;
  }

  .sheet .tall td {
    height: 22px;
  }

  .sheet .section td {
    background: #f0f0f0;
  }

  .section .icon {
    width: 8px;
    height: 8px;
    margin: 0 9px 0 5px;
    color: #444;
  }

  .sheet .label {
    padding-left: 42px;
    border-right: 1px solid #ececec;
    background: linear-gradient(#f0f0f0, #f0f0f0) left / 19px 100% no-repeat;
  }

  .sheet .value {
    padding-left: 3px;
    font-family: var(--font-wide);
    font-size: 11px;
    font-weight: 700;
  }

  .sheet .plain td {
    border-bottom-color: transparent;
  }

  .value .icon {
    margin-right: 6px;
  }

  .swatch {
    width: 17px;
    height: 16px;
    margin-right: 2px;
    border: 1px solid #000;
    background: #f0f0f0;
  }

  .dock-tabs {
    display: flex;
    flex: none;
    align-items: flex-start;
    height: 21px;
    font-family: var(--font-wide);
    font-size: 11px;
  }

  .dock-tab {
    height: 19px;
    padding: 1px 10px 0;
    border: 1px solid #d9d9d9;
    border-top: 0;
    border-left: 0;
  }

  .dock-tab.current {
    height: 21px;
    padding-right: 12px;
    background: #fff;
  }

  /* Scrollbars */
  .scrollbar {
    display: flex;
    flex: none;
    flex-direction: column;
    width: 16px;
    background: #f0f0f0;
  }

  .horizontal {
    flex-direction: row;
    width: auto;
    height: 16px;
    margin-right: 17px;
  }

  .arrow {
    flex: none;
    width: 16px;
    height: 17px;
    color: #555;
  }

  .horizontal .arrow {
    height: 16px;
  }

  .arrow .icon {
    width: 8px;
    height: 8px;
  }

  .track {
    display: flex;
    flex: 1;
    flex-direction: inherit;
  }

  .thumb {
    flex: 0 0 var(--size);
    background: #cdcdcd;
  }

  /* Lower docks */
  .subobjects {
    display: flex;
    height: 229px;
    border-bottom: 1px solid #a0a0a0;
  }

  .pages,
  .inspectors {
    display: flex;
    flex: 1;
    flex-direction: column;
    min-width: 0;
    padding: 2px 0;
  }

  .inspectors {
    flex: none;
    height: 236px;
    padding-right: 2px;
    border-bottom: 1px solid #a0a0a0;
  }

  .page-tabs {
    display: flex;
    flex: none;
    align-items: flex-end;
    height: 24px;
    overflow: hidden;
    font-family: var(--font-wide);
    font-size: 11px;
  }

  .page-tab {
    flex: 0 0 auto;
    gap: 3px;
    height: 22px;
    padding: 0 9px 0 10px;
    border: 1px solid #d9d9d9;
    border-left: 0;
  }

  .page-tab.current {
    height: 24px;
    border-bottom: 0;
    background: #fff;
  }

  .stub {
    width: 10px;
    padding: 0;
  }

  .inspectors .page-tab {
    flex: 1 1 auto;
    gap: 6px;
    padding: 0 8px;
  }

  .dark .icon {
    color: #424242;
  }

  .page-scroll {
    flex: 1 0 13px;
    height: 22px;
    border: 1px solid #adadad;
    background: #f0f0f0;
  }

  .page-scroll i {
    border: 5px solid transparent;
    border-right: 0;
    border-left-color: #000;
  }

  .page-scroll .left {
    border-right: 5px solid #000;
    border-left: 0;
  }

  .page {
    display: flex;
    flex: 1;
    align-items: flex-start;
    min-height: 0;
    border: 1px solid #d9d9d9;
    border-top: 0;
    background: #fff;
    overflow: hidden;
  }

  .page .clip,
  .page .scrollbar {
    align-self: stretch;
  }

  .page th {
    height: 24px;
    padding-left: 4px;
    border-right: 1px solid #e5e5e5;
  }

  .handlers .id-column {
    width: 237px;
  }

  .handlers td {
    height: 17px;
    padding-left: 4px;
    line-height: 16px;
  }

  .handlers .chosen td {
    background: #cce8ff;
  }

  .handlers .chosen td:first-child {
    border: 1px dotted #000;
    border-width: 1px 1px 0 0;
  }

  .side {
    display: flex;
    flex: none;
    flex-direction: column;
    align-items: center;
    width: 36px;
    margin-left: 2px;
    padding-top: 7px;
    border-left: 1px solid #fff;
    color: #424242;
  }

  .side-handle {
    width: 28px;
    height: 5px;
    background: radial-gradient(circle, #aaa 1px, transparent 1px) 0 0 / 4px 3px repeat-x;
  }

  .side button {
    width: 31px;
    height: 30px;
  }

  .side button:disabled {
    color: #bdbdbd;
  }

  .side .icon {
    width: 22px;
    height: 22px;
  }

  .side hr {
    width: 25px;
    margin: 2px 0;
    border: 0;
    border-top: 1px solid #cfcfcf;
  }

  .side .on {
    border: 1px solid #90c8f6;
    background: #c0dcf3;
    font-size: 18px;
    font-weight: 700;
  }

  .inspected .id-column {
    width: 178px;
  }

  .inspected td {
    height: 18px;
  }

  .inspected .cell {
    gap: 7px;
    padding-left: 3px;
  }

  .inspected .root {
    gap: 4px;
    font-family: var(--font-wide);
    font-size: 11px;
    font-weight: 700;
  }

  .twist {
    display: flex;
    justify-content: center;
    width: 12px;
    color: #a0a0a0;
  }

  .twist.open {
    color: #404040;
  }

  .twist .icon {
    width: 9px;
    height: 9px;
  }

  .inspected .twist {
    width: 11px;
    margin-right: 2px;
  }

  /* Project tree */
  .editor {
    display: flex;
    flex: 1;
    flex-direction: column;
    min-width: 0;
    padding-right: 2px;
  }

  .editor-tabs {
    display: flex;
    flex: none;
    align-items: flex-end;
    height: 23px;
    padding-left: 2px;
    font-family: var(--font-wide);
    font-size: 11px;
  }

  .editor-tab {
    display: flex;
    align-items: center;
    gap: 5px;
    height: 21px;
    padding: 0 6px 0 11px;
    border: 1px solid #d9d9d9;
    border-bottom: 0;
  }

  .editor-tab.current {
    height: 23px;
    margin-left: -1px;
    padding: 0 13px;
    background: #fff;
  }

  .editor-tab button {
    gap: 5px;
    color: #222;
  }

  .editor-tab button .icon {
    width: 14px;
    height: 14px;
    color: #616161;
  }

  .editor-tab .close {
    width: 14px;
    height: 14px;
    border: 1px solid #c4c4c4;
    border-radius: 2px;
    background: #d4d4d4;
  }

  .editor-tab.current .close {
    border-color: #c9502f;
    background: #e57a58;
  }

  .editor-tab .close .icon {
    width: 8px;
    height: 8px;
    color: #fff;
  }

  .tree-frame {
    display: flex;
    flex: 1;
    flex-direction: column;
    min-height: 0;
    padding: 0 2px 2px 0;
    border: 1px solid #d9d9d9;
    background: #fff;
  }

  .tree-row {
    display: flex;
    flex: 1;
    min-height: 0;
  }

  .tree th {
    height: 23px;
    padding: 2px 0 0 4px;
    border-right: 1px solid #e5e5e5;
  }

  .tree .tree-id {
    width: 365px;
    padding-left: 5px;
  }

  .tree .tree-name {
    width: 37px;
  }

  .tree th:last-child {
    border-right: 0;
  }

  .tree td {
    height: 18px;
    font-family: var(--font-wide);
  }

  .tree .entry {
    font-size: 11px;
  }

  .node {
    display: flex;
    padding-left: calc(5px + var(--depth) * 20px);
  }

  .node .twist {
    align-items: center;
    width: 12px;
  }

  .caption {
    display: flex;
    flex: 1;
    align-items: center;
    gap: 6px;
    height: 18px;
    margin-left: 4px;
    padding-left: 3px;
  }

  .bold {
    font-size: 11px;
    font-weight: 700;
  }

  .selected .caption,
  .selected .short,
  .selected .entry {
    background: #d9d9d9;
  }

  .italic {
    font-style: italic;
  }

  .short {
    padding-left: 3px;
  }

  .entry .cell {
    gap: 6px;
    padding-left: 3px;
  }

  /* Status */
  .statusbar {
    display: flex;
    flex: none;
    align-items: center;
    height: 20px;
    padding-left: 5px;
  }

  .message {
    flex: 1;
  }

  .slot {
    width: 77px;
    height: 16px;
    border: 1px solid #d0d0d0;
    border-width: 0 1px;
  }

  .grip {
    width: 18px;
    height: 12px;
    background: radial-gradient(circle, #bbb 1px, transparent 1px) 6px 0 / 4px 4px;
    clip-path: polygon(100% 0, 100% 100%, 20% 100%);
  }
</style>
